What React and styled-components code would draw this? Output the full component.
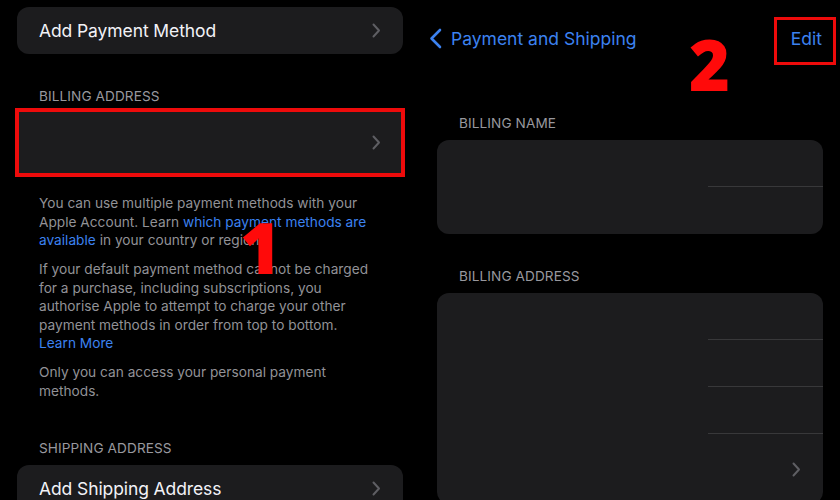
import styled, { createGlobalStyle } from 'styled-components';

const GlobalStyle = createGlobalStyle`
    html, body {
        margin: 0;
        padding: 0;
        background: #000;
        overflow: hidden;
    }
    body {
        font-family: Inter, 'Noto Sans', 'Liberation Sans', sans-serif;
        -webkit-font-smoothing: antialiased;
    }
`;

const Screen = styled.div`
    position: relative;
    width: 840px;
    height: 500px;
    display: flex;
    background: #000;
    overflow: hidden;
`;

const Panel = styled.div`
    width: 420px;
    padding: 7px 17px 0;
    box-sizing: border-box;
    display: flex;
    flex-direction: column;

    & > * {
        flex-shrink: 0;
    }
`;

const Card = styled.div`
    background: #1c1c1e;
    border-radius: ${(p) => (p.$highlight ? '0' : '12px')};
    overflow: hidden;
    ${(p) => p.$highlight && 'outline: 4px solid #ee0b0b; outline-offset: -2px;'}
`;

const Row = styled.div`
    height: ${(p) => p.$h || 47}px;
    display: flex;
    align-items: center;
    justify-content: space-between;
    padding: 0 22px;
    box-sizing: border-box;
    position: relative;
    ${(p) => p.$divider && `
        &::after {
            content: '';
            position: absolute;
            left: 271px;
            right: 0;
            bottom: 0;
            height: 1px;
            background: #38383a;
        }
    `}
`;

const Label = styled.span`
    color: #f2f2f7;
    font-size: 17.5px;
    letter-spacing: -0.1px;
`;

const SectionHeader = styled.div`
    margin: ${(p) => p.$top}px 0 ${(p) => p.$bottom || 8}px;
    padding-left: 22px;
    color: #98989e;
    font-size: 13.6px;
    line-height: 16px;
    text-transform: uppercase;
    letter-spacing: 0.1px;
`;

const Footer = styled.div`
    padding: 0 22px;
    margin-top: 19px;
    color: #929297;
    font-size: 13.7px;
    line-height: 18.5px;
    white-space: nowrap;

    p {
        margin: 0 0 10.5px;
    }
`;

const Link = styled.span`
    color: #3c82f0;
`;

const NavBar = styled.div`
    height: 76px;
    display: flex;
    align-items: center;
    justify-content: space-between;
    padding: 0 18px 0 9px;
    margin: -7px -17px 0;
`;

const BackButton = styled.div`
    display: flex;
    align-items: center;
    gap: 9px;
    color: #3c82f0;
    font-size: 17.5px;
`;

const EditButton = styled.span`
    color: #3c82f0;
    font-size: 17.5px;
`;

const Marker = styled.div`
    position: absolute;
    left: ${(p) => p.$x}px;
    top: ${(p) => p.$y}px;
    color: #ff0a0a;
    font-family: 'Open Sans', 'DejaVu Sans', sans-serif;
    font-weight: 800;
    font-size: 70px;
    line-height: 1;
`;

const Frame = styled.div`
    position: absolute;
    left: 774px;
    top: 17px;
    width: 62px;
    height: 48px;
    box-sizing: border-box;
    border: 3px solid #ee0b0b;
`;

const Chevron = () => (
    <svg width="9" height="15" viewBox="0 0 9 15" fill="none">
        <path d="M1.5 1.5 L7 7.5 L1.5 13.5" stroke="#5e5e63" strokeWidth="2" strokeLinecap="round" strokeLinejoin="round" />
    </svg>
);

const BackChevron = () => (
    <svg width="13" height="21" viewBox="0 0 13 21" fill="none">
        <path d="M11 2 L2.5 10.5 L11 19" stroke="#3c82f0" strokeWidth="2.6" strokeLinecap="round" strokeLinejoin="round" />
    </svg>
);

export default function App() {
    return (
        <>
            <GlobalStyle />
            <Screen>
                <Panel>
                    <Card>
                        <Row>
                            <Label>Add Payment Method</Label>
                            <Chevron />
                        </Row>
                    </Card>

                    <SectionHeader $top={34} $bottom={6}>Billing Address</SectionHeader>
                    <Card $highlight>
                        <Row $h={65}>
                            <span />
                            <Chevron />
                        </Row>
                    </Card>

                    <Footer>
                        <p>
                            You can use multiple payment methods with your<br />
                            Apple Account. Learn <Link>which payment methods are</Link><br />
                            <Link>available</Link> in your country or region.
                        </p>
                        <p>
                            If your default payment method cannot be charged<br />
                            for a purchase, including subscriptions, you<br />
                            authorise Apple to attempt to charge your other<br />
                            payment methods in order from top to bottom.<br />
                            <Link>Learn More</Link>
                        </p>
                        <p>
                            Only you can access your personal payment<br />
                            methods.
                        </p>
                    </Footer>

                    <SectionHeader $top={29} $bottom={9}>Shipping Address</SectionHeader>
                    <Card>
                        <Row>
                            <Label>Add Shipping Address</Label>
                            <Chevron />
                        </Row>
                    </Card>
                </Panel>

                <Panel>
                    <NavBar>
                        <BackButton>
                            <BackChevron />
                            Payment and Shipping
                        </BackButton>
                        <EditButton>Edit</EditButton>
                    </NavBar>

                    <SectionHeader $top={39} $bottom={9}>Billing Name</SectionHeader>
                    <Card>
                        <Row $divider />
                        <Row />
                    </Card>

                    <SectionHeader $top={34} $bottom={9}>Billing Address</SectionHeader>
                    <Card>
                        <Row $divider />
                        <Row $divider />
                        <Row $divider />
                        <Row $h={70}>
                            <span />
                            <Chevron />
                        </Row>
                    </Card>
                </Panel>

                <Marker $x={240} $y={212}>1</Marker>
                <Marker $x={689} $y={29}>2</Marker>
                <Frame />
            </Screen>
        </>
    );
}
